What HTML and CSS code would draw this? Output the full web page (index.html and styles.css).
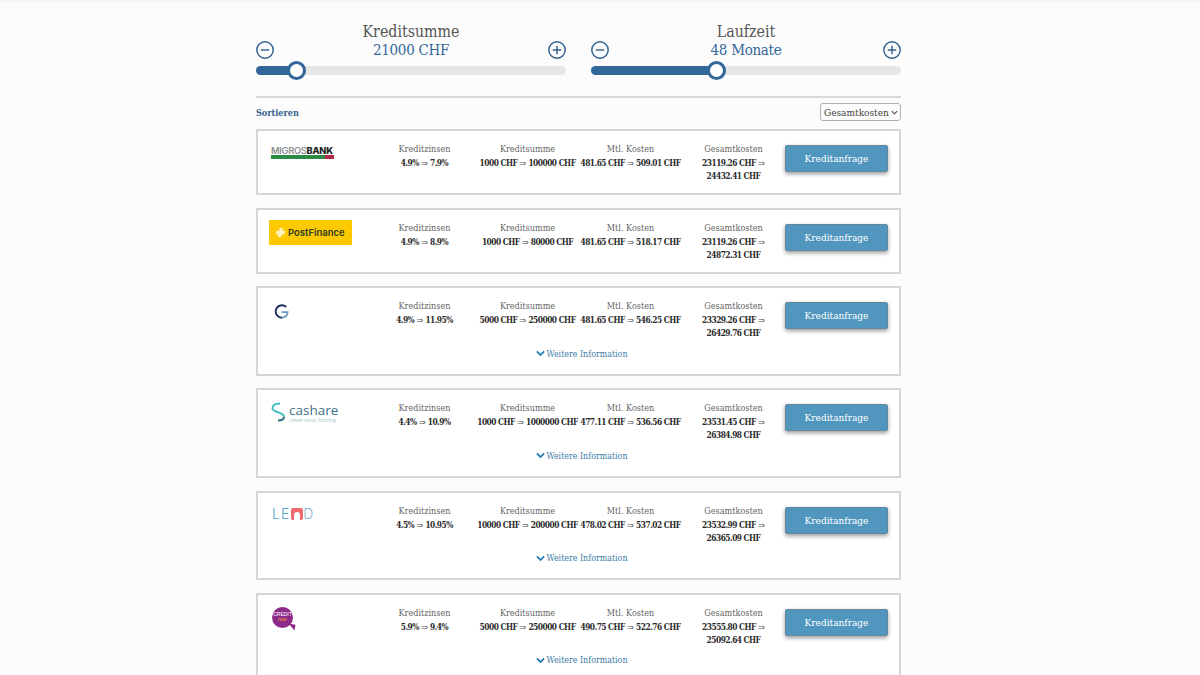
FILE: index.html
```html
<!DOCTYPE html>
<html lang="de">
<head>
<meta charset="utf-8">
<title>Kreditvergleich</title>
<link rel="stylesheet" href="styles.css">
</head>
<body>
<main class="page">
  <section class="sliders">
    <div class="slider">
      <div class="slider-head">
        <svg class="round-btn" viewBox="0 0 18 18"><circle cx="9" cy="9" r="8.200"/><path d="M4.800 9h8.400"/></svg>
        <div class="slider-text"><div class="slider-title">Kreditsumme</div><div class="slider-value">21000 CHF</div></div>
        <svg class="round-btn" viewBox="0 0 18 18"><circle cx="9" cy="9" r="8.200"/><path d="M4.800 9h8.400M9 4.800v8.400"/></svg>
      </div>
      <div class="track"><div class="fill" style="width:40px"><span class="thumb"></span></div></div>
    </div>
    <div class="slider">
      <div class="slider-head">
        <svg class="round-btn" viewBox="0 0 18 18"><circle cx="9" cy="9" r="8.200"/><path d="M4.800 9h8.400"/></svg>
        <div class="slider-text"><div class="slider-title">Laufzeit</div><div class="slider-value">48 Monate</div></div>
        <svg class="round-btn" viewBox="0 0 18 18"><circle cx="9" cy="9" r="8.200"/><path d="M4.800 9h8.400M9 4.800v8.400"/></svg>
      </div>
      <div class="track"><div class="fill" style="width:125px"><span class="thumb"></span></div></div>
    </div>
  </section>

  <div class="sortbar">
    <span class="sort-label">Sortieren</span>
    <div class="select">Gesamtkosten<svg viewBox="0 0 8 5"><path d="M1 1l3 3 3-3"/></svg></div>
  </div>

  <article class="card">
    <div class="row">
      <div class="logo"><div class="migros"><div class="migros-name">MIGROS<b>BANK</b></div><div class="migros-bar"></div></div></div>
      <div class="col"><div class="lbl">Kreditzinsen</div><div class="val">4.9% <span class="arr">⇒</span> 7.9%</div></div>
      <div class="col"><div class="lbl">Kreditsumme</div><div class="val">1000 CHF <span class="arr">⇒</span> 100000 CHF</div></div>
      <div class="col"><div class="lbl">Mtl. Kosten</div><div class="val">481.65 CHF <span class="arr">⇒</span> 509.01 CHF</div></div>
      <div class="col col-total"><div class="lbl">Gesamtkosten</div><div class="val">23119.26 CHF <span class="arr">⇒</span> 24432.41 CHF</div></div>
      <a class="btn">Kreditanfrage</a>
    </div>
  </article>

  <article class="card">
    <div class="row">
      <div class="logo"><div class="postfinance"><svg viewBox="0 0 12 12"><path d="M4.500 1h4L8 4.200h3L10.400 8H7.500L7 11H3l.6-3H1l.5-3.800h3.400z"/></svg>PostFinance</div></div>
      <div class="col"><div class="lbl">Kreditzinsen</div><div class="val">4.9% <span class="arr">⇒</span> 8.9%</div></div>
      <div class="col"><div class="lbl">Kreditsumme</div><div class="val">1000 CHF <span class="arr">⇒</span> 80000 CHF</div></div>
      <div class="col"><div class="lbl">Mtl. Kosten</div><div class="val">481.65 CHF <span class="arr">⇒</span> 518.17 CHF</div></div>
      <div class="col col-total"><div class="lbl">Gesamtkosten</div><div class="val">23119.26 CHF <span class="arr">⇒</span> 24872.31 CHF</div></div>
      <a class="btn">Kreditanfrage</a>
    </div>
  </article>

  <article class="card">
    <div class="row">
      <div class="logo"><svg class="logo-g" viewBox="0 0 16 16" fill="none"><path d="M13 3.200A6.600 6.600 0 1 0 8.600 14.600" stroke="#1d2f63" stroke-width="2"/><path d="M8.600 14.600A6.600 6.600 0 0 0 14.500 8.600H8" stroke="#6f9fc4" stroke-width="2"/></svg></div>
      <div class="col"><div class="lbl">Kreditzinsen</div><div class="val">4.9% <span class="arr">⇒</span> 11.95%</div></div>
      <div class="col"><div class="lbl">Kreditsumme</div><div class="val">5000 CHF <span class="arr">⇒</span> 250000 CHF</div></div>
      <div class="col"><div class="lbl">Mtl. Kosten</div><div class="val">481.65 CHF <span class="arr">⇒</span> 546.25 CHF</div></div>
      <div class="col col-total"><div class="lbl">Gesamtkosten</div><div class="val">23329.26 CHF <span class="arr">⇒</span> 26429.76 CHF</div></div>
      <a class="btn">Kreditanfrage</a>
    </div>
    <a class="more"><svg viewBox="0 0 10 7"><path d="M1 1.200l4 4 4-4"/></svg>Weitere Information</a>
  </article>

  <article class="card">
    <div class="row">
      <div class="logo"><div class="cashare"><svg viewBox="0 0 15 20" fill="none"><path d="M9 1.500C4.500 1.500 1.500 3.400 1.500 6.500c0 4 11.500 3.500 11.500 8" stroke="#41c0c6" stroke-width="2"/><path d="M13 14.500c0 2.500-2.500 4-6 4" stroke="#37717f" stroke-width="2"/></svg><div class="cashare-text"><div class="cashare-name">cashare</div><div class="cashare-tag">clever swiss funding</div></div></div></div>
      <div class="col"><div class="lbl">Kreditzinsen</div><div class="val">4.4% <span class="arr">⇒</span> 10.9%</div></div>
      <div class="col"><div class="lbl">Kreditsumme</div><div class="val">1000 CHF <span class="arr">⇒</span> 1000000 CHF</div></div>
      <div class="col"><div class="lbl">Mtl. Kosten</div><div class="val">477.11 CHF <span class="arr">⇒</span> 536.56 CHF</div></div>
      <div class="col col-total"><div class="lbl">Gesamtkosten</div><div class="val">23531.45 CHF <span class="arr">⇒</span> 26384.98 CHF</div></div>
      <a class="btn">Kreditanfrage</a>
    </div>
    <a class="more"><svg viewBox="0 0 10 7"><path d="M1 1.200l4 4 4-4"/></svg>Weitere Information</a>
  </article>

  <article class="card">
    <div class="row">
      <div class="logo"><div class="lend">LE<span class="lend-n"></span><span class="lend-d">D</span></div></div>
      <div class="col"><div class="lbl">Kreditzinsen</div><div class="val">4.5% <span class="arr">⇒</span> 10.95%</div></div>
      <div class="col"><div class="lbl">Kreditsumme</div><div class="val">10000 CHF <span class="arr">⇒</span> 200000 CHF</div></div>
      <div class="col"><div class="lbl">Mtl. Kosten</div><div class="val">478.02 CHF <span class="arr">⇒</span> 537.02 CHF</div></div>
      <div class="col col-total"><div class="lbl">Gesamtkosten</div><div class="val">23532.99 CHF <span class="arr">⇒</span> 26365.09 CHF</div></div>
      <a class="btn">Kreditanfrage</a>
    </div>
    <a class="more"><svg viewBox="0 0 10 7"><path d="M1 1.200l4 4 4-4"/></svg>Weitere Information</a>
  </article>

  <article class="card">
    <div class="row">
      <div class="logo"><div class="creditnow"><span>CREDIT</span><em>now</em></div></div>
      <div class="col"><div class="lbl">Kreditzinsen</div><div class="val">5.9% <span class="arr">⇒</span> 9.4%</div></div>
      <div class="col"><div class="lbl">Kreditsumme</div><div class="val">5000 CHF <span class="arr">⇒</span> 250000 CHF</div></div>
      <div class="col"><div class="lbl">Mtl. Kosten</div><div class="val">490.75 CHF <span class="arr">⇒</span> 522.76 CHF</div></div>
      <div class="col col-total"><div class="lbl">Gesamtkosten</div><div class="val">23555.80 CHF <span class="arr">⇒</span> 25092.64 CHF</div></div>
      <a class="btn">Kreditanfrage</a>
    </div>
    <a class="more"><svg viewBox="0 0 10 7"><path d="M1 1.200l4 4 4-4"/></svg>Weitere Information</a>
  </article>
</main>
</body>
</html>
```
FILE: styles.css
```css
* { box-sizing: border-box; }
html, body { margin: 0; height: 100%; overflow: hidden; }
body {
  background: linear-gradient(#f1f1f1, #fcfcfc 3px);
  font-family: "DejaVu Serif", "Liberation Serif", serif;
  font-stretch: condensed;
  color: #333;
}
.page { width: 645px; margin: 0 0 0 256px; padding-top: 21px; }
.sliders { display: flex; gap: 25px; }
.slider { flex: 1; }
.slider-head { display: flex; align-items: flex-end; justify-content: space-between; height: 39px; }
.slider-text { text-align: center; }
.slider-title { font-size: 15.800px; line-height: 19px; color: #555; }
.slider-value { font-size: 15px; line-height: 19px; margin-top: .5px; color: #336699; letter-spacing: -.3px; }
.round-btn { width: 18px; height: 18px; margin-bottom: 1px; fill: none; stroke: #2f5f8f; stroke-width: 1.400; }
.track { position: relative; height: 9px; margin-top: 6px; background: #e6e6e6; border-radius: 5px; }
.fill { position: relative; height: 9px; background: #336699; border-radius: 5px; }
.thumb {
  position: absolute; right: -10px; top: -5px;
  width: 19px; height: 19px;
  background: #fff; border: 3.500px solid #336699; border-radius: 50%;
}
.sortbar {
  display: flex; justify-content: space-between; align-items: flex-start;
  margin-top: 21px; padding-top: 5px; height: 33px;
  border-top: 2px solid #d8d8d8;
}
.sort-label { font-size: 9px; line-height: 12px; margin-top: 4px; font-weight: 700; color: #37628f; }
.select {
  display: flex; align-items: center; justify-content: space-between;
  width: 81px; height: 18px; padding: 0 2px 0 3px;
  border: 1px solid #b0b0b0; border-radius: 3px;
  font-size: 10px; color: #444;
}
.select svg { width: 7px; height: 5px; fill: none; stroke: #444; stroke-width: 1.200; }
.card {
  margin-bottom: 12.500px;
  padding: 12px 12px 12px 0;
  background: #fff;
  border: 2px solid #d6d6d6;
}
.row { display: flex; align-items: flex-start; height: 38px; }
.logo { width: 115px; flex: none; padding: 0 0 0 11px; }
.col { width: 103px; flex: none; text-align: center; font-size: 9px; line-height: 13px; padding: 0; margin-top: -1px; }
.lbl { color: #666; line-height: 14px; }
.val { padding-top: 1px; color: #2a2a2a; font-size: 8.300px; font-weight: 700; letter-spacing: -.5px; white-space: nowrap; }
.arr { font-family: "DejaVu Sans", sans-serif; font-stretch: normal; font-weight: 400; color: #555; letter-spacing: 0; }
.col-total { padding: 0 12px; }
.col-total .val { white-space: normal; }
.btn {
  flex: none; width: 103px; height: 27px; margin-top: 2px;
  display: flex; align-items: center; justify-content: center;
  background: #5096be; color: #fff; font-size: 10px;
  border: 1px solid #64879d; border-radius: 2px; box-shadow: 0 2px 4px rgba(0,0,0,.4);
}
.more {
  display: flex; align-items: center; justify-content: center; gap: 2px;
  height: 13px; margin: 9px -12px 1.830px 0; padding-left: 6px;
  font-size: 8.800px; color: #3c7da6;
}
.more svg { width: 9px; height: 7px; fill: none; stroke: #1f7ab0; stroke-width: 2; }
.migros { width: 63px; margin-left: 2px; margin-top: 3px; font-stretch: normal; }
.migros-name { font-family: "Inter", sans-serif; font-size: 9.300px; line-height: 9px; font-weight: 600; color: #8a8f8f; letter-spacing: -.3px; white-space: nowrap; }
.migros-name b { color: #1c1c1c; font-weight: 800; }
.migros-bar { height: 4px; background: linear-gradient(90deg, #2b8a46 0 85%, #b02a48 85%); }
.postfinance {
  display: flex; align-items: center; gap: 2px;
  width: 83px; height: 25px; margin-top: -2px; padding-left: 6px;
  background: #fdc900; font-stretch: normal;
  font-family: "Inter", sans-serif; font-size: 9.500px; font-weight: 600; color: #2e3a22; white-space: nowrap;
}
.postfinance svg { width: 11px; height: 11px; fill: #fff3c4; flex: none; }
.logo-g { display: block; width: 15px; height: 15px; margin-left: 5px; margin-top: 4px; }
.cashare { display: flex; gap: 3px; margin: 0 0 0 2px; font-stretch: normal; }
.cashare svg { width: 15px; height: 20px; flex: none; }
.cashare-name { font-family: "Open Sans", sans-serif; font-size: 13.500px; line-height: 15px; margin-top: 1px; color: #3d7286; }
.cashare-tag { font-family: "Open Sans", sans-serif; font-size: 5px; line-height: 5px; color: #a9c3cb; white-space: nowrap; }
.lend { display: flex; align-items: center; margin: 3px 0 0 3px; height: 12px; font-family: "Inter", sans-serif; font-stretch: normal; font-weight: 300; font-size: 14px; letter-spacing: 1px; color: #4f9fc7; }
.lend-n { position: relative; display: block; width: 12px; height: 12px; margin-left: 1px; background: #ee6a6c; border-radius: 2px; }
.lend-n::after { content: ""; position: absolute; left: 3px; bottom: 0; width: 6px; height: 8px; background: #fff; border-radius: 3px 3px 0 0; }
.lend-d { color: #7fb6d6; letter-spacing: 0; }
.creditnow {
  position: relative; display: flex; flex-direction: column; align-items: center; justify-content: center;
  width: 21px; height: 21px; margin: 0 0 0 3px;
  background: #8e2a8b; border-radius: 50%;
  font-family: "Liberation Sans", sans-serif; font-stretch: normal; color: #fff; font-size: 5px; line-height: 6px;
}
.creditnow::after {
  content: ""; position: absolute; right: -2px; bottom: -2px;
  border-top: 6px solid #8e2a8b; border-left: 7px solid transparent;
  transform: rotate(10deg);
}
.creditnow em { font-style: normal; color: #f5a623; font-size: 4.500px; }
```
